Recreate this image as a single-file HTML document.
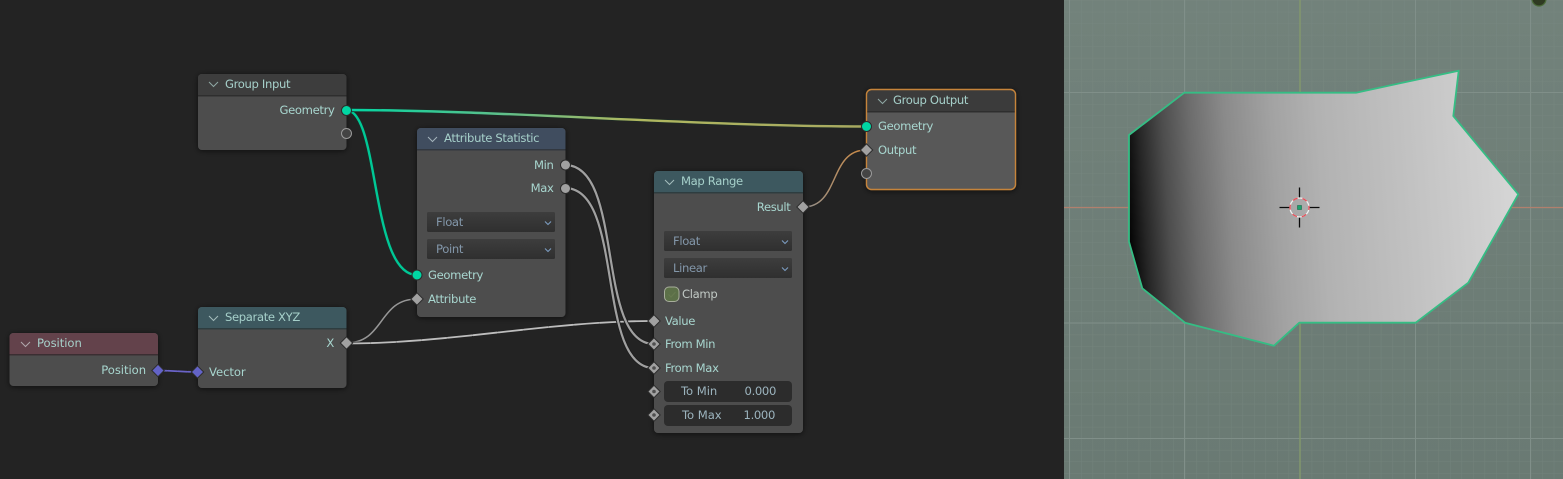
<!DOCTYPE html>
<html><head><meta charset="utf-8"><title>Geometry Nodes</title>
<style>
html,body{margin:0;padding:0;background:#232323;width:1563px;height:479px;overflow:hidden}
svg{display:block;filter:blur(.3px)}
text{font-family:"DejaVu Sans","Liberation Sans",sans-serif;font-size:11.6px;letter-spacing:-.35px;fill:#a8d6cf}
.t{fill:#a6d0ca}
.dd{fill:#8397aa}
.f{fill:#9cb4be}
.c{fill:#c0c8c4}
.n{letter-spacing:-.05px}
</style></head><body>
<svg width="1563" height="479" viewBox="0 0 1563 479" xmlns="http://www.w3.org/2000/svg">
<defs>
<linearGradient id="vp" x1="0" y1="0" x2="0" y2="1"><stop offset="0" stop-color="#72827b"/><stop offset="1" stop-color="#6a7a73"/></linearGradient>
<pattern id="minor" x="1069.5" y="92.5" width="11.53" height="11.53" patternUnits="userSpaceOnUse"><path d="M0 0V11.53M0 0H11.53" stroke="#7f8e88" stroke-width="1" fill="none" opacity=".4"/></pattern>
<linearGradient id="mesh" gradientUnits="userSpaceOnUse" x1="1129" y1="215" x2="1518" y2="190">
<stop offset="0" stop-color="#060606"/><stop offset=".04" stop-color="#262626"/><stop offset=".1" stop-color="#4d4d4d"/><stop offset=".17" stop-color="#6c6c6c"/><stop offset=".26" stop-color="#8a8a8a"/><stop offset=".38" stop-color="#a2a2a2"/><stop offset=".5" stop-color="#b2b2b2"/><stop offset=".7" stop-color="#c0c0c0"/><stop offset="1" stop-color="#d6d6d6"/>
</linearGradient>
<linearGradient id="lk1" gradientUnits="userSpaceOnUse" x1="346" y1="0" x2="866" y2="0"><stop offset="0" stop-color="#00d6a3"/><stop offset=".3" stop-color="#5fbf8a"/><stop offset=".55" stop-color="#b0b860"/><stop offset="1" stop-color="#a8a860"/></linearGradient>
<linearGradient id="lk2" gradientUnits="userSpaceOnUse" x1="803" y1="0" x2="866" y2="0"><stop offset="0" stop-color="#8f8f8f"/><stop offset="1" stop-color="#d08a40"/></linearGradient>
<linearGradient id="dd" x1="0" y1="0" x2="0" y2="1"><stop offset="0" stop-color="#3d3d3d"/><stop offset="1" stop-color="#2f2f2f"/></linearGradient>
<filter id="sh" x="-15%" y="-15%" width="130%" height="130%"><feGaussianBlur in="SourceAlpha" stdDeviation="3"/><feOffset dy="1"/><feComponentTransfer><feFuncA type="linear" slope=".6"/></feComponentTransfer><feMerge><feMergeNode/><feMergeNode in="SourceGraphic"/></feMerge></filter>
<path id="di" d="M0 -6.200L6.200 0 0 6.200 -6.200 0Z"/>
</defs>

<!-- editor bg -->
<rect width="1563" height="479" fill="#232323"/>

<!-- 3D viewport -->
<rect x="1064" y="0" width="499" height="479" fill="url(#vp)"/>
<rect x="1064" y="0" width="499" height="479" fill="url(#minor)"/>
<g stroke="#808f89" stroke-width="1" fill="none">
<path d="M1069.5 0V479M1184.5 0V479M1415.5 0V479M1530.5 0V479"/>
<path d="M1064 92.5H1563M1064 323H1563M1064 438.5H1563"/>
</g>
<path d="M1300 0V479" stroke="#84996c" stroke-width="1.4"/>
<path d="M1064 207.5H1563" stroke="#b1806e" stroke-width="1.2"/>
<circle cx="1539" cy="-1" r="7" fill="#2f3a22" stroke="#4b6b3a" stroke-width="1.2"/>
<polygon points="1129,135 1184.3,92.7 1356,92.7 1458.7,70.7 1453.3,116 1518.3,194.3 1468.3,282.7 1415.7,322.7 1299.3,322.7 1274,345.7 1185,322.7 1142.3,288.3 1129,241.7" fill="url(#mesh)" stroke="#35bd84" stroke-width="1.8" stroke-linejoin="round"/>
<!-- cursor -->
<g>
<path d="M1279.5 207.5H1289.5M1309.5 207.5H1319.5M1299.5 187.5V197.5M1299.5 217.5V227.5" stroke="#0b0b0b" stroke-width="1.3"/>
<circle cx="1299.5" cy="207.5" r="9.5" fill="none" stroke="#f0f0f0" stroke-width="1.3"/>
<circle cx="1299.5" cy="207.5" r="9.5" fill="none" stroke="#e8505a" stroke-width="1.3" stroke-dasharray="5 5" stroke-dashoffset="2.5"/>
<rect x="1297.5" y="205.5" width="4" height="4" fill="#1da06c" stroke="#176b4b" stroke-width=".6"/>
</g>

<!-- links -->
<g fill="none" stroke-linecap="round">
<path d="M158 370.500C170 370.500 185 372 197 372" stroke="#222" stroke-width="3.400"/>
<path d="M158 370.500C170 370.500 185 372 197 372" stroke="#6a63c8" stroke-width="1.800" stroke-dasharray="9 1"/>
<path d="M346 110C380 110 370 275 417 275" stroke="#1d2a26" stroke-width="4"/>
<path d="M346 110C380 110 370 275 417 275" stroke="#00c896" stroke-width="2.400"/>
<path d="M346 110C500 110 700 126.500 866 126.500" stroke="#1d2a26" stroke-width="4"/>
<path d="M346 110C500 110 700 126.500 866 126.500" stroke="url(#lk1)" stroke-width="2.400"/>
<path d="M346 343C385 343 378 299 417 299" stroke="#222" stroke-width="3"/>
<path d="M346 343C385 343 378 299 417 299" stroke="#969696" stroke-width="1.500"/>
<path d="M346 343.500C450 343.500 550 321 654 321" stroke="#222" stroke-width="3.400"/>
<path d="M346 343.500C450 343.500 550 321 654 321" stroke="#bdbdbd" stroke-width="1.800" stroke-dasharray="24 1.500"/>
<path d="M565 165C625 165 595 344 654 344" stroke="#1e1e1e" stroke-width="4"/>
<path d="M565 165C625 165 595 344 654 344" stroke="#a0a0a0" stroke-width="2.200"/>
<path d="M565 188C625 188 595 368 654 368" stroke="#1e1e1e" stroke-width="4"/>
<path d="M565 188C625 188 595 368 654 368" stroke="#a0a0a0" stroke-width="2.200"/>
<path d="M803 207C840 207 829 150 866 150" stroke="#222" stroke-width="3"/>
<path d="M803 207C840 207 829 150 866 150" stroke="url(#lk2)" stroke-width="1.500"/>
</g>

<!-- Group Input -->
<g filter="url(#sh)">
<rect x="198" y="74" width="148.500" height="76" rx="4" fill="#4e4e4e"/>
<path d="M198 95V78a4 4 0 0 1 4-4H342.500a4 4 0 0 1 4 4V95Z" fill="#3c3c3c"/>
<rect x="198" y="95" width="148.500" height="1.500" fill="#2d2d2d"/>
</g>
<path d="M209 82l4.500 4.500 4.500-4.500" fill="none" stroke="#8fa8a4" stroke-width="1"/>
<text x="225" y="88" class="t">Group Input</text>
<text x="334.500" y="114" text-anchor="end">Geometry</text>

<!-- Position -->
<g filter="url(#sh)">
<rect x="9.500" y="333" width="148.500" height="53" rx="4" fill="#4e4e4e"/>
<path d="M9.500 354V337a4 4 0 0 1 4-4H154a4 4 0 0 1 4 4V354Z" fill="#63424c"/>
<rect x="9.500" y="354" width="148.500" height="1.500" fill="#3a2e32"/>
</g>
<path d="M21 342l4.500 4.500 4.500-4.500" fill="none" stroke="#b0a8ac" stroke-width="1"/>
<text x="37" y="347" class="t n">Position</text>
<text x="146" y="374" text-anchor="end" class="n">Position</text>

<!-- Separate XYZ -->
<g filter="url(#sh)">
<rect x="198" y="307" width="148.500" height="81" rx="4" fill="#4e4e4e"/>
<path d="M198 328V311a4 4 0 0 1 4-4H342.500a4 4 0 0 1 4 4V328Z" fill="#3e585e"/>
<rect x="198" y="328" width="148.500" height="1.500" fill="#2f3c40"/>
</g>
<path d="M209 316l4.500 4.500 4.500-4.500" fill="none" stroke="#a4bcbc" stroke-width="1"/>
<text x="225" y="321" class="t">Separate XYZ</text>
<text x="334" y="347" text-anchor="end">X</text>
<text x="209" y="376" class="n">Vector</text>

<!-- Attribute Statistic -->
<g filter="url(#sh)">
<rect x="417" y="128" width="148.500" height="189" rx="4" fill="#4e4e4e"/>
<path d="M417 149V132a4 4 0 0 1 4-4H561.500a4 4 0 0 1 4 4V149Z" fill="#414e5f"/>
<rect x="417" y="149" width="148.500" height="1.500" fill="#30373f"/>
</g>
<path d="M428 137l4.500 4.500 4.500-4.500" fill="none" stroke="#a4b4bc" stroke-width="1"/>
<text x="444" y="142" class="t">Attribute Statistic</text>
<text x="553.500" y="169" text-anchor="end">Min</text>
<text x="553.500" y="192" text-anchor="end">Max</text>
<rect x="427" y="212" width="128" height="20" rx="1.500" fill="url(#dd)"/>
<text x="436" y="226" class="dd">Float</text>
<path d="M545 221.500l3 3 3-3" fill="none" stroke="#7b9cc0" stroke-width="1.100"/>
<rect x="427" y="239" width="128" height="20" rx="1.500" fill="url(#dd)"/>
<text x="436" y="253" class="dd">Point</text>
<path d="M545 248.500l3 3 3-3" fill="none" stroke="#7b9cc0" stroke-width="1.100"/>
<text x="428" y="279">Geometry</text>
<text x="428" y="303">Attribute</text>

<!-- Map Range -->
<g filter="url(#sh)">
<rect x="654" y="171" width="149" height="262" rx="4" fill="#4e4e4e"/>
<path d="M654 192V175a4 4 0 0 1 4-4H799a4 4 0 0 1 4 4V192Z" fill="#3e585e"/>
<rect x="654" y="192" width="149" height="1.500" fill="#2f3c40"/>
</g>
<path d="M665 180l4.500 4.500 4.500-4.500" fill="none" stroke="#a4bcbc" stroke-width="1"/>
<text x="681" y="185" class="t">Map Range</text>
<text x="790.500" y="211" text-anchor="end">Result</text>
<rect x="664" y="231" width="128" height="20" rx="1.500" fill="url(#dd)"/>
<text x="673" y="245" class="dd">Float</text>
<path d="M782 240.500l3 3 3-3" fill="none" stroke="#7b9cc0" stroke-width="1.100"/>
<rect x="664" y="258" width="128" height="20" rx="1.500" fill="url(#dd)"/>
<text x="673" y="272" class="dd">Linear</text>
<path d="M782 267.500l3 3 3-3" fill="none" stroke="#7b9cc0" stroke-width="1.100"/>
<rect x="664.500" y="287" width="14.500" height="14.500" rx="4.500" fill="#5c7048" stroke="#a8ae9c" stroke-width="1"/>
<path d="M668.500 294.500l2.500 2.500 4.500-5" fill="none" stroke="#66794f" stroke-width="1.200"/>
<text x="682" y="298" class="c">Clamp</text>
<text x="665" y="325">Value</text>
<text x="665" y="348">From Min</text>
<text x="665" y="372">From Max</text>
<rect x="664" y="381" width="128" height="21" rx="4" fill="#2c2c2c"/>
<text x="681" y="395" class="f n">To Min</text>
<text x="776" y="395" text-anchor="end" class="f">0.000</text>
<rect x="664" y="405" width="128" height="21" rx="4" fill="#2c2c2c"/>
<text x="682" y="419" class="f n">To Max</text>
<text x="775" y="419" text-anchor="end" class="f">1.000</text>

<!-- Group Output -->
<g filter="url(#sh)">
<rect x="866" y="89" width="150" height="101" rx="5" fill="#585858"/>
<path d="M866 111V94a5 5 0 0 1 5-5H1011a5 5 0 0 1 5 5V111Z" fill="#3b3b3b"/>
<rect x="866" y="111" width="150" height="1.500" fill="#2d2d2d"/>
<rect x="866.500" y="89.500" width="149" height="100" rx="5" fill="none" stroke="#c6843a" stroke-width="1.400"/>
</g>
<path d="M878 99l4.500 4.500 4.500-4.500" fill="none" stroke="#8fa8a4" stroke-width="1"/>
<text x="893" y="104" class="t">Group Output</text>
<text x="878" y="130">Geometry</text>
<text x="878" y="154">Output</text>

<!-- sockets -->
<g stroke="#2c2c2c" stroke-width="1">
<circle cx="346.500" cy="110.500" r="5" fill="#00d6a3"/>
<circle cx="346.500" cy="133.500" r="5" fill="#444" stroke="#9a9a9a"/>
<circle cx="417" cy="275" r="5" fill="#00d6a3"/>
<circle cx="866.500" cy="126.500" r="5" fill="#00d6a3"/>
<circle cx="866.500" cy="173.500" r="5" fill="#444" stroke="#9a9a9a"/>
<circle cx="565.500" cy="165" r="5" fill="#a1a1a1"/>
<circle cx="565.500" cy="188.500" r="5" fill="#a1a1a1"/>
<use href="#di" x="158" y="370.500" fill="#6363c7"/>
<use href="#di" x="197.500" y="372" fill="#6363c7"/>
<use href="#di" x="346.500" y="343" fill="#a1a1a1"/>
<use href="#di" x="417" y="299" fill="#a1a1a1"/>
<use href="#di" x="654" y="321" fill="#a1a1a1"/>
<use href="#di" x="654" y="344" fill="#a1a1a1"/>
<use href="#di" x="654" y="368" fill="#a1a1a1"/>
<use href="#di" x="654" y="391.500" fill="#a1a1a1"/>
<use href="#di" x="654" y="415" fill="#a1a1a1"/>
<use href="#di" x="803" y="207" fill="#a1a1a1"/>
<use href="#di" x="866.500" y="150" fill="#a1a1a1"/>
</g>
<g fill="#4e4e4e">
<circle cx="654" cy="344" r="1.800"/><circle cx="654" cy="368" r="1.800"/><circle cx="654" cy="391.500" r="1.800"/><circle cx="654" cy="415" r="1.800"/>
</g>
</svg>
</body></html>
